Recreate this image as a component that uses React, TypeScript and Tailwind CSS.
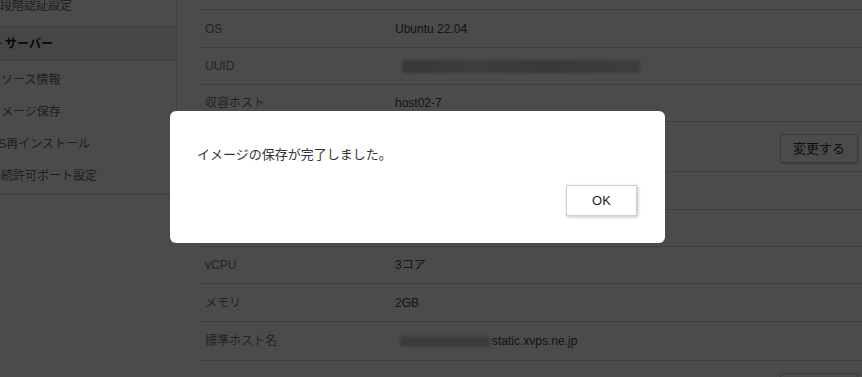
const font = { fontFamily: '"Liberation Sans", "Noto Sans CJK JP", sans-serif' };

const SideItem = ({ label }: { label: string }) => (
  <div className="h-[32px] flex items-center text-[12px] text-[#666] whitespace-nowrap">
    <span className="-ml-[11px]">{label}</span>
  </div>
);

const Row = ({ label, h, children }: { label: string; h: string; children?: React.ReactNode }) => (
  <div className={`${h} flex items-center border-b border-[#d5d5d5] text-[12px]`}>
    <div className="w-[195px] pl-[5px] text-[#777]">{label}</div>
    <div className="flex-1 flex items-center text-[#444]">{children}</div>
  </div>
);

const ButtonRow = ({ label, button }: { label: string; button: string }) => (
  <div className="h-[50px] flex items-start pt-[12px] border-b border-[#d5d5d5] text-[12px]">
    <div className="w-[195px] pl-[5px] pt-[6px] text-[#777]">{label}</div>
    <div className="flex-1" />
    <button className="h-[29px] px-[12px] mr-[4px] bg-white border border-[#c8c8c8] rounded-[2px] shadow-[0_1px_2px_rgba(0,0,0,0.2)] text-[13px] text-[#333]">
      {button}
    </button>
  </div>
);

export default function App() {
  return (
    <div className="relative w-[862px] h-[377px] overflow-hidden bg-white" style={font}>
      <div className="flex">
        {/* sidebar */}
        <div className="w-[177px] shrink-0 -mt-[11px]">
          <div className="border-r border-[#d5d5d5]">
            <div className="h-[38px] flex items-center text-[12px] text-[#666] whitespace-nowrap border-b border-[#d5d5d5]">
              <span className="-ml-[12px] -mt-[3px]">二段階認証設定</span>
            </div>
            <div className="h-[34px] flex items-center gap-[3px] bg-[#ededed] border-b border-[#d5d5d5] text-[12px] font-bold text-[#222] whitespace-nowrap">
              <span className="-ml-[8px] text-[10px]">▶</span>
              <span>サーバー</span>
            </div>
            <div className="pt-[3px] pb-[2px] border-b border-[#d5d5d5]">
              <SideItem label="リソース情報" />
              <SideItem label="イメージ保存" />
              <SideItem label="OS再インストール" />
              <SideItem label="接続許可ポート設定" />
            </div>
          </div>
        </div>

        {/* content */}
        <div className="flex-1 pl-[23px] pt-[9px]">
          <div className="border-t border-[#d5d5d5]">
            <Row label="OS" h="h-[38px]">Ubuntu 22.04</Row>
            <Row label="UUID" h="h-[37px]">
              <div className="ml-[7px] w-[238px] h-[13px] bg-[linear-gradient(90deg,#bdbdbd,#cfcfcf_30%,#c2c2c2_60%,#d0d0d0)] blur-[1.5px]" />
            </Row>
            <Row label="収容ホスト" h="h-[37px]">host02-7</Row>
            <ButtonRow label="ネームタグ" button="変更する" />
            <Row label="ステータス" h="h-[38px]">稼働中</Row>
            <Row label="IPアドレス" h="h-[37px]">0.0.0.0</Row>
            <Row label="vCPU" h="h-[37px]">3コア</Row>
            <Row label="メモリ" h="h-[38px]">2GB</Row>
            <Row label="標準ホスト名" h="h-[39px]">
              <div className="ml-[5px] w-[90px] h-[11px] bg-[#cdcdcd] blur-[1.5px]" />
              <span className="ml-[2px]">static.xvps.ne.jp</span>
            </Row>
            <ButtonRow label="ホスト名" button="変更する" />
          </div>
        </div>
      </div>

      {/* overlay */}
      <div className="absolute inset-0 bg-[rgba(0,0,0,0.705)]" />

      {/* dialog */}
      <div className="absolute left-[170px] top-[111px] w-[495px] h-[132px] bg-white rounded-[6px] px-[27px] pt-[35px] flex flex-col">
        <p className="text-[13px] leading-[18px] text-[#333]">イメージの保存が完了しました。</p>
        <div className="flex justify-end mt-[21px] pr-[1px]">
          <button className="w-[71px] h-[31px] bg-white border border-[#d0d0d0] shadow-[1px_1px_3px_rgba(0,0,0,0.25)] text-[13px] text-[#222]">
            OK
          </button>
        </div>
      </div>
    </div>
  );
}
